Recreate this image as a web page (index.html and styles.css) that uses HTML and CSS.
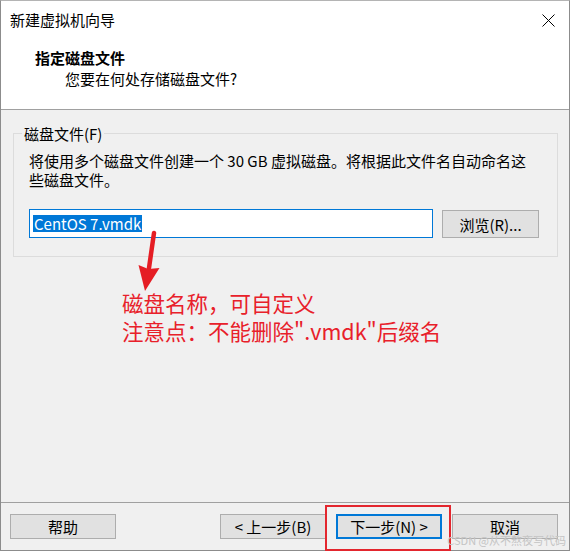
FILE: index.html
```html
<!DOCTYPE html>
<html lang="zh-CN">
<head>
<meta charset="utf-8">
<title>新建虚拟机向导</title>
<link rel="stylesheet" href="styles.css">
</head>
<body>
<div class="window">
  <div class="header">
    <div class="titlebar">
      <span class="title">新建虚拟机向导</span>
      <svg class="close" width="13" height="13" viewBox="0 0 13 13"><path d="M0.5 0.5 L12.5 12.5 M12.5 0.5 L0.5 12.5" stroke="#000" stroke-width="1" fill="none"/></svg>
    </div>
    <div class="heading">指定磁盘文件</div>
    <div class="subheading">您要在何处存储磁盘文件?</div>
  </div>
  <div class="main">
    <fieldset class="group">
      <legend>磁盘文件(F)</legend>
      <p class="desc">将使用多个磁盘文件创建一个 30 GB 虚拟磁盘。将根据此文件名自动命名这<br>些磁盘文件。</p>
      <div class="file-row">
        <div class="input"><span class="sel">CentOS 7.vmdk</span></div>
        <div class="btn browse">浏览(R)...</div>
      </div>
    </fieldset>
    <div class="note">
      <div>磁盘名称，可自定义</div>
      <div>注意点：不能删除".vmdk"后缀名</div>
    </div>
  </div>
  <div class="footer">
    <div class="btn">帮助</div>
    <div class="nav">
      <div class="btn">&lt; 上一步(B)</div>
      <div class="btn default">下一步(N) &gt;</div>
      <div class="btn">取消</div>
    </div>
  </div>
  <svg class="arrow" width="40" height="70" viewBox="0 0 40 70">
    <line x1="24" y1="8" x2="19" y2="43" stroke="#e51d24" stroke-width="4.5" stroke-linecap="round"/>
    <polygon points="15,66 8.5,40 18.3,44 29.5,43" fill="#e51d24"/>
  </svg>
  <div class="mark-box"></div>
  <div class="watermark">CSDN @从不熬夜写代码</div>
</div>
</body>
</html>
```

FILE: styles.css
```css
* { box-sizing: border-box; }
html, body { margin: 0; padding: 0; background: #fff; }
body {
  font-family: "Microsoft YaHei UI", "Noto Sans CJK SC", sans-serif;
  font-size: 15px;
  color: #000;
}
.window {
  position: relative;
  width: 570px;
  height: 551px;
  border: 1px solid #8c8c8c;
  border-top-color: #b4b4b4;
  display: flex;
  flex-direction: column;
  background: #f0f0f0;
}
.header {
  background: #fff;
  border-bottom: 1px solid #a0a0a0;
  padding-bottom: 20px;
}
.titlebar {
  height: 38px;
  display: flex;
  align-items: center;
  justify-content: space-between;
  padding: 0 14px 0 9px;
}
.title { line-height: 38px; }
.close { display: block; }
.heading {
  margin-top: 8px;
  padding-left: 34px;
  font-weight: bold;
  line-height: 21px;
}
.subheading {
  padding-left: 64px;
  line-height: 21px;
}
.main {
  flex: 1;
  display: flex;
  flex-direction: column;
}
.group {
  margin: 13px 11px 0 12px;
  padding: 0 15px 18px 15px;
  border: 1px solid #dcdcdc;
  min-width: 0;
}
.group legend {
  padding: 0 2px;
  margin-left: -7px;
  line-height: 21px;
}
.desc {
  margin: 7px 0 0 0;
  line-height: 19px;
  white-space: nowrap;
}
.file-row {
  display: flex;
  align-items: flex-start;
  gap: 9px;
  margin-top: 20px;
}
.input {
  width: 404px;
  height: 29px;
  border: 1px solid #0078d7;
  background: #fff;
  display: flex;
  align-items: center;
  padding-left: 3px;
}
.sel {
  background: #0078d7;
  color: #fff;
  line-height: 17px;
  padding: 0 1px;
}
.btn {
  width: 106px;
  height: 25px;
  border: 1px solid #adadad;
  background: #e1e1e1;
  display: flex;
  align-items: center;
  justify-content: center;
  line-height: 1;
  white-space: nowrap;
}
.btn.browse {
  width: 97px;
  height: 28px;
  margin-top: 1px;
}
.btn.default {
  border: 2px solid #0078d7;
}
.note {
  margin-top: 32px;
  padding-left: 121px;
  color: #e8202a;
  font-size: 21.5px;
  line-height: 28px;
}
.footer {
  border-top: 1px solid #a0a0a0;
  height: 48px;
  display: flex;
  justify-content: space-between;
  align-items: flex-start;
  padding: 11px 11px 0 9px;
}
.nav {
  display: flex;
  gap: 10px;
}
.arrow {
  position: absolute;
  left: 129px;
  top: 224px;
  pointer-events: none;
}
.mark-box {
  position: absolute;
  left: 324px;
  top: 504px;
  width: 126px;
  height: 46px;
  border: 2px solid #e3262e;
}
.watermark {
  position: absolute;
  right: 3px;
  bottom: 3px;
  font-size: 11px;
  line-height: 14px;
  color: #c4c4c4;
  white-space: nowrap;
}
```
